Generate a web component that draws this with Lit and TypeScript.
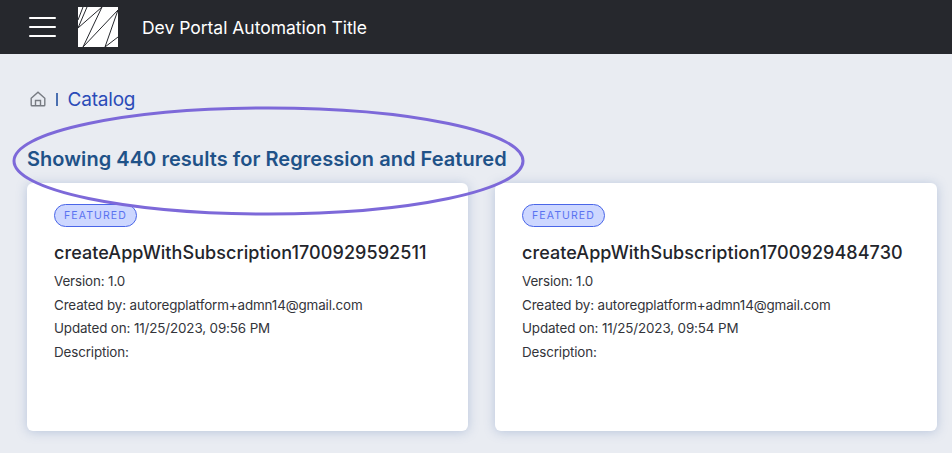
import { LitElement, html, css } from "lit";
import { customElement } from "lit/decorators.js";

const cards = [
  { name: "createAppWithSubscription1700929592511", updated: "11/25/2023, 09:56 PM" },
  { name: "createAppWithSubscription1700929484730", updated: "11/25/2023, 09:54 PM" },
];

@customElement("app-root")
export class AppRoot extends LitElement {
  static styles = css`
    :host { display: block; position: relative; width: 952px; height: 453px; overflow: hidden; background: #e9ecf2; font-family: Inter, "Noto Sans", sans-serif; }
    .bar { height: 54px; background: #26282d; display: flex; align-items: center; padding-left: 29px; color: #fff; }
    .burger { width: 27px; display: flex; flex-direction: column; gap: 7px; margin-right: 22px; }
    .burger i { display: block; height: 2px; background: #fff; border-radius: 1px; }
    .logo { width: 40px; height: 40px; display: block; margin-right: 24px; }
    .app { font-size: 17.5px; letter-spacing: -0.02px; white-space: nowrap; }
    main { padding: 34px 16px 0 27px; }
    .crumb { display: flex; align-items: center; height: 22px; padding-left: 3px; color: #2b4bb8; font-size: 19px; letter-spacing: -0.2px; }
    .crumb svg { width: 16px; height: 16px; margin-right: 10px; }
    .sep { width: 1.5px; height: 13px; background: #4a6fb0; margin-right: 10px; }
    h1 { margin: 37px 0 0; font-size: 20px; line-height: 24px; font-weight: 600; color: #1f5288; letter-spacing: 0.05px; white-space: nowrap; }
    .cards { display: grid; grid-template-columns: 441px 442px; gap: 27px; margin-top: 12px; }
    .card { height: 248px; box-sizing: border-box; background: #fff; border-radius: 6px; box-shadow: 0 1px 11px rgba(105,135,185,.38); padding: 20px 27px; color: #33343a; }
    .tag { display: inline-block; box-sizing: border-box; height: 23px; line-height: 21px; padding: 0 9px; border: 1px solid #4a66e8; border-radius: 12px; background: #cdd7ff; color: #5a72f0; font-size: 10.5px; letter-spacing: 1.1px; }
    h2 { margin: 14px 0 5px; font-size: 18px; line-height: 24px; font-weight: 500; color: #23252b; letter-spacing: 0.07px; white-space: nowrap; }
    p { margin: 0; font-size: 13.4px; line-height: 23.6px; letter-spacing: -0.13px; white-space: nowrap; font-weight: 400; }
    .ring { position: absolute; left: 0; top: 0; width: 952px; height: 453px; pointer-events: none; }
  `;

  render() {
    return html`
      <div class="bar">
        <div class="burger"><i></i><i></i><i></i></div>
        <svg class="logo" viewBox="0 0 40 40">
          <rect width="40" height="40" fill="#fff"/>
          <path d="M0 21 L9 0 M0 13 L5 0 M0 21 L24 0 M5 40 L24 0 M5 40 L40 3 M27 40 L40 3 M27 40 L40 30" stroke="#26282d" stroke-width="1" fill="none"/>
        </svg>
        <span class="app">Dev Portal Automation Title</span>
      </div>
      <main>
        <div class="crumb">
          <svg viewBox="0 0 16 16" fill="none" stroke="#777b82" stroke-width="1.4">
            <path d="M1.2 7.2 8 1.2l6.8 6V14a.8.8 0 0 1-.8.8H2a.8.8 0 0 1-.8-.8z"/>
            <path d="M5.5 14.8V9.5h5v5.3"/>
          </svg>
          <span class="sep"></span>
          <span>Catalog</span>
        </div>
        <h1>Showing 440 results for Regression and Featured</h1>
        <div class="cards">
          ${cards.map(c => html`
            <div class="card">
              <span class="tag">FEATURED</span>
              <h2>${c.name}</h2>
              <p>Version: 1.0</p>
              <p>Created by: autoregplatform+admn14@gmail.com</p>
              <p>Updated on: ${c.updated}</p>
              <p>Description:</p>
            </div>`)}
        </div>
      </main>
      <svg class="ring" viewBox="0 0 952 453">
        <ellipse cx="268.5" cy="161" rx="254.5" ry="53" fill="none" stroke="#7d69d9" stroke-width="3"/>
      </svg>
    `;
  }
}
